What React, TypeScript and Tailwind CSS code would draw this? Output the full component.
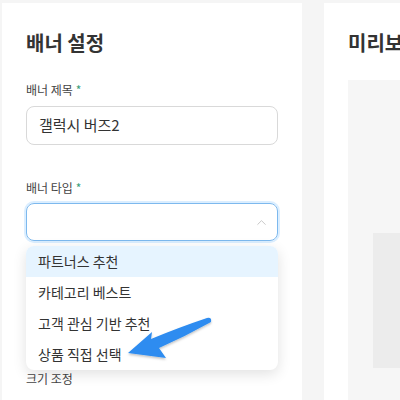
import { ChevronUp } from 'lucide-react';

const font = { fontFamily: '"Noto Sans CJK KR", "Noto Sans", sans-serif' };

const options = ['파트너스 추천', '카테고리 베스트', '고객 관심 기반 추천', '상품 직접 선택'];

function Label({ text, required }: { text: string; required?: boolean }) {
  return (
    <div className="text-[12px] leading-4 text-[#444]">
      {text}
      {required && <span className="ml-[3px] text-[#3aa07a]">*</span>}
    </div>
  );
}

function Arrow() {
  return (
    <svg
      className="pointer-events-none absolute left-0 top-0 z-20"
      width="400"
      height="400"
      viewBox="0 0 400 400"
    >
      <defs>
        <filter id="sh" x="-20%" y="-20%" width="140%" height="160%">
          <feDropShadow dx="0" dy="1.5" stdDeviation="1.2" floodColor="#000" floodOpacity="0.25" />
        </filter>
      </defs>
      <path
        d="M128 353 L152 332 L151 339 Q180 327 207 318 Q212 317 211 322 Q186 336 159 348 L166 358 Z"
        fill="#2d8cf0"
        filter="url(#sh)"
      />
    </svg>
  );
}

export default function App() {
  return (
    <div className="relative h-[400px] overflow-hidden bg-[#f5f5f5] pl-[2px] pt-[3px]" style={font}>
      <div className="flex gap-[22px]">
        <div className="h-[420px] w-[300px] shrink-0 bg-white px-6 pt-[26px]">
          <h2 className="text-[20px] font-bold leading-7 text-[#333]">배너 설정</h2>

          <div className="mt-[25px]">
            <Label text="배너 제목" required />
            <div className="mt-[8px] flex h-[39px] items-center rounded-lg border border-[#d9d9d9] px-3 text-[15px] text-[#333]">
              갤럭시 버즈2
            </div>
          </div>

          <div className="mt-[35px]">
            <Label text="배너 타입" required />
            <div className="relative mt-[7px]">
              <div className="flex h-[38px] items-center justify-end rounded-lg border border-[#7db9ee] px-[8px] ring-2 ring-[#dbeeff]">
                <ChevronUp size={15} strokeWidth={1.3} className="text-[#bbb]" />
              </div>
              <div className="absolute left-0 right-0 top-[43px] z-10 overflow-hidden rounded-lg bg-white shadow-[0_4px_14px_rgba(0,0,0,0.12)]">
                {options.map((o, i) => (
                  <div
                    key={o}
                    className={`flex h-[31px] items-center px-3 text-[14px] text-[#333] ${i === 0 ? 'bg-[#e6f4ff]' : ''}`}
                  >
                    {o}
                  </div>
                ))}
              </div>
            </div>
          </div>

          <div className="mt-[130px]">
            <Label text="크기 조정" />
          </div>
        </div>

        <div className="h-[420px] flex-1 bg-white pl-6 pt-[26px]">
          <h2 className="whitespace-nowrap text-[20px] font-bold leading-7 text-[#333]">미리보기</h2>
          <div className="mt-[23px] h-[340px] bg-[#f6f6f6] pl-[25px] pt-[153px]">
            <div className="h-[135px] bg-[#ececec]" />
          </div>
        </div>
      </div>
      <Arrow />
    </div>
  );
}
